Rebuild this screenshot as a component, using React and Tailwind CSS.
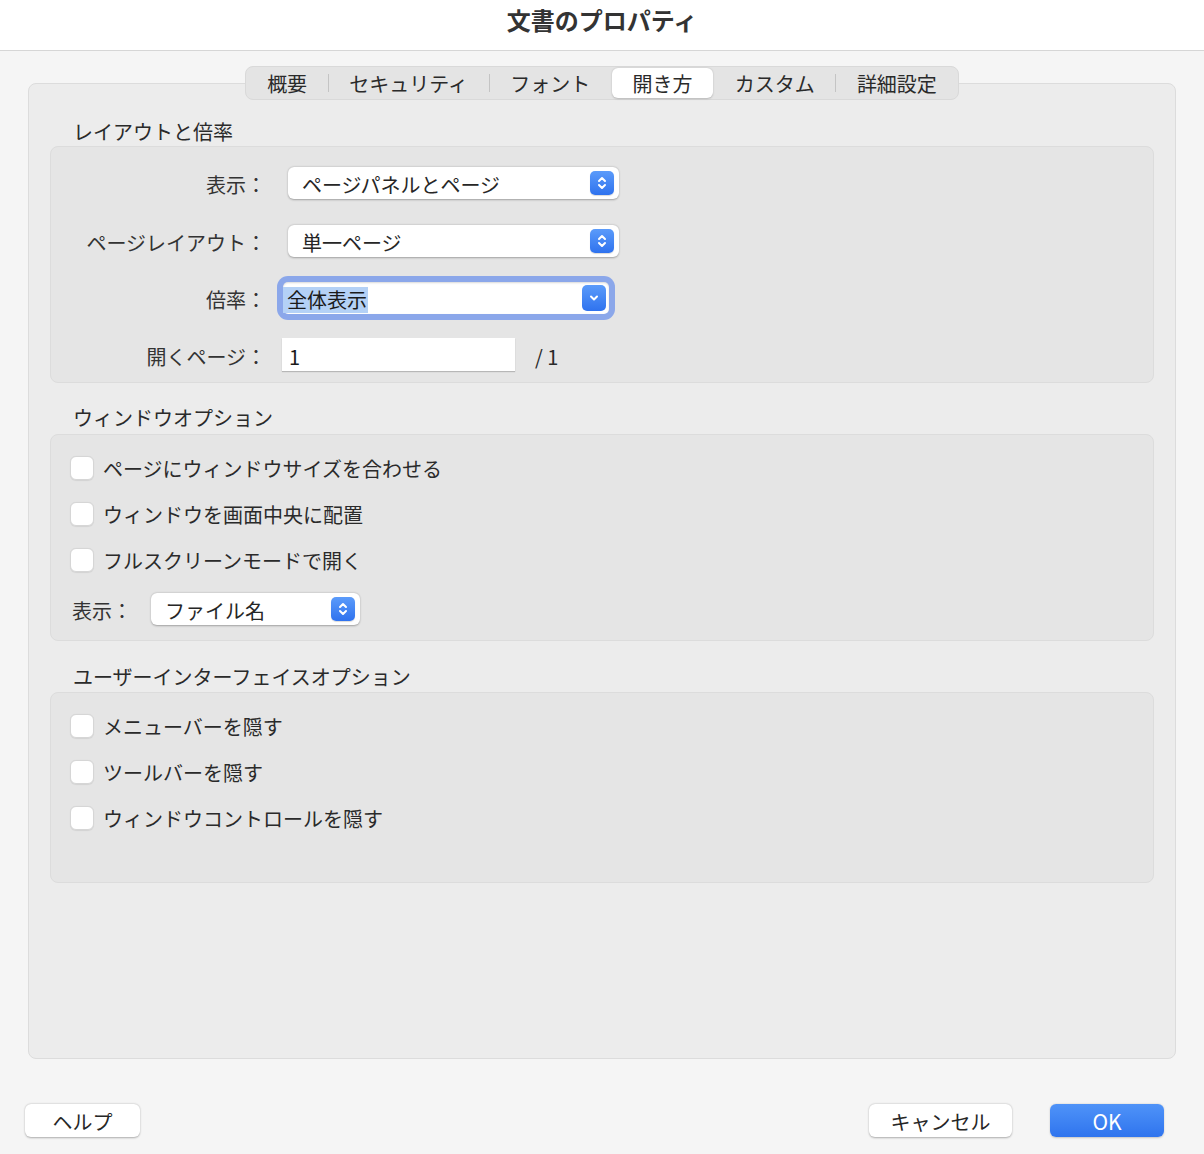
import React from "react";

const font = { fontFamily: '"Noto Sans CJK JP", "Noto Sans", sans-serif' };

const Stepper = () => (
  <span className="flex h-[24px] w-[24px] items-center justify-center rounded-[5px] bg-gradient-to-b from-[#5b9bfa] to-[#2f72ee] shadow-[0_1px_1px_rgba(0,0,0,0.15)]">
    <svg width="12" height="16" viewBox="0 0 12 16" fill="none" stroke="white" strokeWidth="2" strokeLinecap="round" strokeLinejoin="round">
      <path d="M3 6 L6 3 L9 6" />
      <path d="M3 10 L6 13 L9 10" />
    </svg>
  </span>
);

const DropDown = () => (
  <span className="flex h-[26px] w-[24px] items-center justify-center rounded-[5px] bg-gradient-to-b from-[#5b9bfa] to-[#2f72ee]">
    <svg width="12" height="12" viewBox="0 0 12 12" fill="none" stroke="white" strokeWidth="2" strokeLinecap="round" strokeLinejoin="round">
      <path d="M3 4.5 L6 7.5 L9 4.5" />
    </svg>
  </span>
);

const Select = ({ value, width }) => (
  <div
    className={`flex h-[32px] items-center justify-between rounded-[6px] bg-white pl-[14px] pr-[5px] text-[20px] text-[#262626] shadow-[0_0.5px_2px_rgba(0,0,0,0.3)] ${width}`}
  >
    <span className="mt-[3px] leading-[26px]">{value}</span>
    <Stepper />
  </div>
);

const Check = ({ label }) => (
  <div className="flex h-[24px] items-center gap-[9px]">
    <span className="h-[24px] w-[24px] rounded-[6px] border border-[#d6d6d6] bg-white shadow-[0_0.5px_1px_rgba(0,0,0,0.08)]" />
    <span className="mt-[2px] text-[20px] leading-[24px] text-[#2a2a2a]">{label}</span>
  </div>
);

const Label = ({ children }) => (
  <div className="mt-[4px] w-[215px] text-right text-[20px] leading-[28px] text-[#333]">{children}</div>
);

const tabs = ["概要", "セキュリティ", "フォント", "開き方", "カスタム", "詳細設定"];

export default function App() {
  return (
    <div style={font} className="flex h-[1154px] w-[1204px] flex-col bg-[#f5f5f5]">
      <div className="flex h-[51px] items-center justify-center border-b border-[#d6d6d6] bg-white pb-[11px]">
        <h1 className="text-[24px] font-bold text-[#333]">文書のプロパティ</h1>
      </div>

      <div className="flex flex-col px-[28px] pt-[15px]">
        <div className="relative z-10 flex justify-center">
          <div className="flex h-[34px] items-center rounded-[8px] border border-[#d9d9d9] bg-[#e4e4e4] px-[1px]">
            {tabs.map((t, i) => {
              const active = t === "開き方";
              const nextActive = tabs[i + 1] === "開き方";
              const last = i === tabs.length - 1;
              return (
                <React.Fragment key={t}>
                  <div
                    className={`flex h-[30px] items-center px-[20.6px] pt-[2px] text-[20px] text-[#2a2a2a] ${
                      active ? "mx-[1px] rounded-[6px] bg-white shadow-[0_0.5px_2px_rgba(0,0,0,0.2)]" : ""
                    }`}
                  >
                    {t}
                  </div>
                  {!active && !nextActive && !last && <span className="h-[18px] w-px bg-[#c4c4c4]" />}
                </React.Fragment>
              );
            })}
          </div>
        </div>

        <div className="-mt-[17px] flex h-[976px] flex-col rounded-[8px] border border-[#dcdcdc] bg-[#ececec] px-[21px] pt-[34px]">
          <h2 className="pl-[23px] text-[20px] leading-[28px] text-[#2a2a2a]">レイアウトと倍率</h2>
          <div className="flex h-[237px] flex-col rounded-[8px] border border-[#dcdcdc] bg-[#e5e5e5] pt-[20px]">
            <div className="flex h-[32px] items-center">
              <Label>表示：</Label>
              <div className="ml-[22px]">
                <Select value="ページパネルとページ" width="w-[331px]" />
              </div>
            </div>
            <div className="mt-[26px] flex h-[32px] items-center">
              <Label>ページレイアウト：</Label>
              <div className="ml-[22px]">
                <Select value="単一ページ" width="w-[331px]" />
              </div>
            </div>
            <div className="mt-[19px] flex h-[44px] items-center">
              <Label>倍率：</Label>
              <div className="ml-[11px] rounded-[11px] bg-[#8ba7ea] p-[6px]">
                <div className="flex h-[32px] w-[326px] items-center justify-between rounded-[5px] bg-white pr-[3px] text-[20px] text-[#1a1a1a] shadow-[inset_0_1px_2px_rgba(0,0,0,0.15)]">
                  <span className="mt-[4px] bg-[#b4d1f6] pl-[4px] pr-[1px] leading-[26px]">全体表示</span>
                  <DropDown />
                </div>
              </div>
            </div>
            <div className="mt-[18px] flex h-[33px] items-center">
              <Label>開くページ：</Label>
              <div className="ml-[16px] flex h-[33px] w-[233px] items-center bg-white pl-[7px] pt-[4px] text-[20px] text-[#1a1a1a] shadow-[0_1px_1px_rgba(0,0,0,0.2)]">
                1
              </div>
              <span className="ml-[20px] mt-[4px] text-[20px] leading-[28px] text-[#2a2a2a]">/ 1</span>
            </div>
          </div>

          <h2 className="mt-[21px] pl-[23px] text-[20px] leading-[28px] text-[#2a2a2a]">ウィンドウオプション</h2>
          <div className="mt-[2px] flex h-[207px] flex-col gap-[22px] rounded-[8px] border border-[#dcdcdc] bg-[#e5e5e5] pl-[19px] pt-[21px]">
            <Check label="ページにウィンドウサイズを合わせる" />
            <Check label="ウィンドウを画面中央に配置" />
            <Check label="フルスクリーンモードで開く" />
            <div className="-mt-[1px] flex h-[32px] items-center">
              <span className="mt-[4px] w-[81px] pl-[2px] text-[20px] leading-[28px] text-[#333]">表示：</span>
              <Select value="ファイル名" width="w-[209px]" />
            </div>
          </div>

          <h2 className="mt-[22px] pl-[23px] text-[20px] leading-[28px] text-[#2a2a2a]">ユーザーインターフェイスオプション</h2>
          <div className="mt-[1px] flex h-[191px] flex-col gap-[22px] rounded-[8px] border border-[#dcdcdc] bg-[#e5e5e5] pl-[19px] pt-[21px]">
            <Check label="メニューバーを隠す" />
            <Check label="ツールバーを隠す" />
            <Check label="ウィンドウコントロールを隠す" />
          </div>
        </div>
      </div>

      <div className="mt-[45px] flex items-center px-[25px] pr-[40px]">
        <button className="flex h-[33px] w-[115px] items-center justify-center rounded-[6px] bg-white pt-[3px] text-[20px] text-[#262626] shadow-[0_0.5px_2px_rgba(0,0,0,0.3)]">
          ヘルプ
        </button>
        <div className="flex-1" />
        <button className="flex h-[33px] w-[143px] items-center justify-center rounded-[6px] bg-white pt-[3px] text-[20px] text-[#262626] shadow-[0_0.5px_2px_rgba(0,0,0,0.3)]">
          キャンセル
        </button>
        <button className="ml-[38px] flex h-[33px] w-[114px] items-center justify-center rounded-[6px] bg-gradient-to-b from-[#4f93f8] to-[#2f74ee] pt-[2px] text-[21px] text-white shadow-[0_0.5px_2px_rgba(0,0,0,0.2)]">
          OK
        </button>
      </div>
    </div>
  );
}
